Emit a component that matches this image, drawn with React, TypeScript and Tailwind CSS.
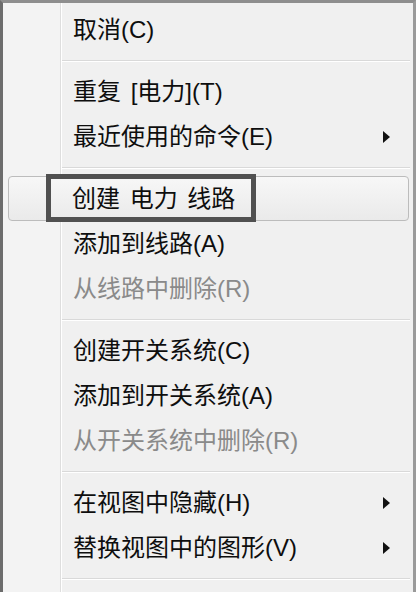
import React from 'react';

type Item = { label: string; disabled?: boolean; submenu?: boolean; selected?: boolean };

const groups: Item[][] = [
  [{ label: '取消(C)' }],
  [{ label: '重复 [电力](T)' }, { label: '最近使用的命令(E)', submenu: true }],
  [
    { label: '创建 电力 线路', selected: true },
    { label: '添加到线路(A)' },
    { label: '从线路中删除(R)', disabled: true },
  ],
  [
    { label: '创建开关系统(C)' },
    { label: '添加到开关系统(A)' },
    { label: '从开关系统中删除(R)', disabled: true },
  ],
  [
    { label: '在视图中隐藏(H)', submenu: true },
    { label: '替换视图中的图形(V)', submenu: true },
  ],
];

function Arrow() {
  return (
    <span className="absolute right-[23px] top-1/2 -translate-y-1/2 w-0 h-0 border-y-[6px] border-y-transparent border-l-[7px] border-l-[#111]" />
  );
}

function MenuRow({ item }: { item: Item }) {
  const text = (
    <span
      className={
        'whitespace-pre text-[24px] leading-none [word-spacing:3px] ' +
        (item.disabled ? 'text-[#8a8a8a]' : 'text-[#0e0e0e]')
      }
    >
      {item.label}
    </span>
  );

  if (item.selected) {
    return (
      <div className="relative ml-[5px] mr-[4px] h-[45px] flex items-center pl-[63px] border border-[#bcbcbc] rounded-[4px] bg-gradient-to-b from-[#f7f7f7] to-[#eaeaea]">
        <div className="absolute left-[37px] top-[-3px] w-[210px] h-[48px] border-[5px] border-[#505050]" />
        {text}
      </div>
    );
  }

  return (
    <div className="relative h-[45px] flex items-center pl-[70px]">
      {text}
      {item.submenu && <Arrow />}
    </div>
  );
}

function Separator() {
  return (
    <div className="h-[17px] flex items-center pl-[59px] pr-[3px]">
      <div className="w-full h-[2px] border-t border-[#d9d9d9] border-b-white border-b" />
    </div>
  );
}

export default function App() {
  return (
    <div
      className="w-[416px] h-[592px] overflow-hidden border-l-[3px] border-l-[#6c6c6c] border-t-[3px] border-t-[#8e8e8e] border-r-[3px] border-r-[#9a9a9a] pt-[4px] bg-[linear-gradient(90deg,#f3f3f3_57px,#dedede_57px,#dedede_58px,#ffffff_58px,#ffffff_59px,#f0f0f0_59px)]"
      style={{ fontFamily: '"Liberation Sans", "Noto Sans CJK SC", sans-serif' }}
    >
      {groups.map((g, gi) => (
        <React.Fragment key={gi}>
          {g.map((item) => (
            <MenuRow key={item.label} item={item} />
          ))}
          <Separator />
        </React.Fragment>
      ))}
    </div>
  );
}
